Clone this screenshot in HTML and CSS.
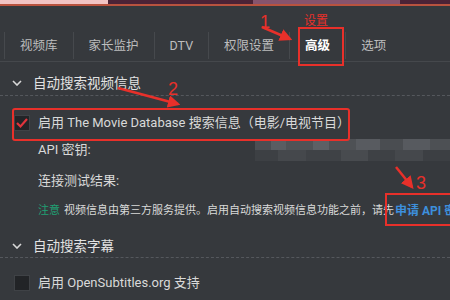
FILE: index.html
```html
<!DOCTYPE html>
<html>
<head>
<meta charset="utf-8">
<title>设置 - 高级</title>
<link rel="stylesheet" href="styles.css">
</head>
<body>
<div class="page">
  <div class="top-strip"><span class="seg-pink"></span><span class="seg-dark"></span><span class="seg-purple"></span><span class="seg-dark2"></span></div>
  <div class="top-line"></div>

  <div class="tabs">
    <div class="tab">视频库</div>
    <div class="tab">家长监护</div>
    <div class="tab">DTV</div>
    <div class="tab">权限设置</div>
    <div class="tab active">高级</div>
    <div class="tab">选项</div>
  </div>

  <div class="section-head first">
    <svg class="chev" width="10" height="6" viewBox="0 0 10 6"><polyline points="1,1 5,5 9,1" fill="none" stroke="#d8d8d8" stroke-width="1.6"/></svg>
    <span>自动搜索视频信息</span>
  </div>

  <div class="row check-row">
    <span class="box checked">
      <svg width="16" height="16" viewBox="0 0 16 16"><polyline points="3,8 6.5,11.5 13,4" fill="none" stroke="#e0343c" stroke-width="2.2"/></svg>
    </span>
    <span>启用 The Movie Database 搜索信息（电影/电视节目）</span>
  </div>

  <div class="row api-row">
    <span class="label">API 密钥:</span>
    <span class="key-blur"></span>
  </div>

  <div class="row test-row">
    <span class="label">连接测试结果:</span>
  </div>

  <div class="row note-row">
    <span class="note-tag">注意</span>
    <span class="note">视频信息由第三方服务提供。启用自动搜索视频信息功能之前，请先</span><a class="link">申请 API 密钥</a>
  </div>

  <div class="section-head second">
    <svg class="chev" width="10" height="6" viewBox="0 0 10 6"><polyline points="1,1 5,5 9,1" fill="none" stroke="#d8d8d8" stroke-width="1.6"/></svg>
    <span>自动搜索字幕</span>
  </div>

  <div class="row check-row sub-row">
    <span class="box"></span>
    <span>启用 OpenSubtitles.org 支持</span>
  </div>

  <!-- annotation layer -->
  <svg class="marks" width="450" height="300" viewBox="0 0 450 300">
    <defs>
      <marker id="head" markerWidth="5" markerHeight="5" refX="4" refY="2.5" orient="auto" markerUnits="strokeWidth">
        <path d="M0,0 L5,2.5 L0,5 Z" fill="#e8302a"/>
      </marker>
    </defs>
    <text x="260" y="28" class="num">1</text>
    <text x="304" y="25" class="mark-label">设置</text>
    <line x1="262" y1="27" x2="290" y2="39" stroke="#e8302a" stroke-width="2.5" marker-end="url(#head)"/>
    <rect x="299" y="28" width="44" height="37" fill="none" stroke="#e8302a" stroke-width="2"/>

    <text x="168" y="95" class="num">2</text>
    <line x1="118" y1="88" x2="178" y2="104" stroke="#e8302a" stroke-width="2.5" marker-end="url(#head)"/>
    <rect x="13" y="109" width="336" height="31" fill="none" stroke="#e8302a" stroke-width="2" rx="2"/>

    <text x="416" y="189" class="num">3</text>
    <line x1="396" y1="167" x2="412" y2="187" stroke="#e8302a" stroke-width="2.5" marker-end="url(#head)"/>
    <rect x="386" y="194" width="70" height="31" fill="none" stroke="#e8302a" stroke-width="2"/>
  </svg>
</div>
</body>
</html>
```

FILE: styles.css
```css
body {
  margin: 0;
  background: #36393d;
  font-family: Roboto, "Noto Sans CJK SC", sans-serif;
  color: #d9d9d9;
}
.page {
  position: relative;
  width: 450px;
  height: 300px;
  overflow: hidden;
  background: #36393d;
}
.top-strip {
  display: flex;
  height: 4px;
}
.top-strip span {
  display: block;
  height: 100%;
}
.seg-pink { width: 108px; background: #f2c4c4; }
.seg-dark { width: 145px; background: #4c2336; }
.seg-purple { width: 147px; background: #87546d; }
.seg-dark2 { flex: 1; background: #4c2336; }
.top-line {
  height: 2px;
  background: #b9533f;
}

.tabs {
  display: flex;
  margin-top: 26px;
  padding-left: 4px;
  height: 29px;
  border-bottom: 1px solid #45484c;
}
.tab {
  padding: 0 15px;
  line-height: 28px;
  font-size: 12.5px;
  color: #bdbdbd;
  border-left: 1px solid #46494d;
  margin-bottom: 2px;
}
.tab.active {
  color: #fff;
  font-weight: bold;
}

.section-head {
  display: flex;
  align-items: center;
  gap: 11px;
  padding: 13px 0 4px 12px;
  line-height: 16px;
  font-size: 13.5px;
  color: #e2e2e2;
  border-bottom: 1px dashed #55585d;
}
.section-head.second {
  padding-top: 16px;
  padding-bottom: 3px;
}
.chev {
  display: block;
}

.row {
  display: flex;
  align-items: center;
  line-height: 22px;
  font-size: 13px;
  padding-left: 38px;
}
.check-row {
  position: relative;
  margin-top: 16px;
}
.sub-row {
  margin-top: 14px;
}
.box {
  position: absolute;
  left: 14px;
  top: 3px;
  width: 16px;
  height: 16px;
  background: #222427;
  border: 1px solid #3f4246;
  box-sizing: border-box;
}
.box svg {
  display: block;
  margin: -1px;
}
.api-row {
  margin-top: 5px;
}
.key-blur {
  margin-left: auto;
  width: 195px;
  height: 22px;
  background:
    linear-gradient(90deg, #4b4e53 0 8%, #5a5d62 8% 16%, #505357 16% 30%, #5d6065 30% 38%, #4e5155 38% 52%, #585b60 52% 64%, #4a4d51 64% 76%, #575a5f 76% 90%, #4d5054 90%) top / 100% 11px no-repeat,
    linear-gradient(90deg, #3d4044 0 12%, #45484c 12% 26%, #3f4246 26% 44%, #484b4f 44% 58%, #3e4145 58% 72%, #45484c 72% 86%, #3c3f43 86%) bottom / 100% 11px no-repeat;
}
.test-row {
  margin-top: 9px;
}
.note-row {
  margin-top: 8px;
  font-size: 11px;
  white-space: nowrap;
}
.note-tag {
  color: #1fa074;
  margin-right: 4px;
}
.link {
  color: #3d8fdc;
  font-weight: bold;
  font-size: 12px;
  margin-left: 1px;
}

.marks {
  position: absolute;
  left: 0;
  top: 0;
}
.num {
  fill: #e8302a;
  font-family: "Liberation Sans", sans-serif;
  font-size: 18px;
}
.mark-label {
  fill: #e8302a;
  font-family: "Noto Sans CJK SC", sans-serif;
  font-size: 12px;
}
```
